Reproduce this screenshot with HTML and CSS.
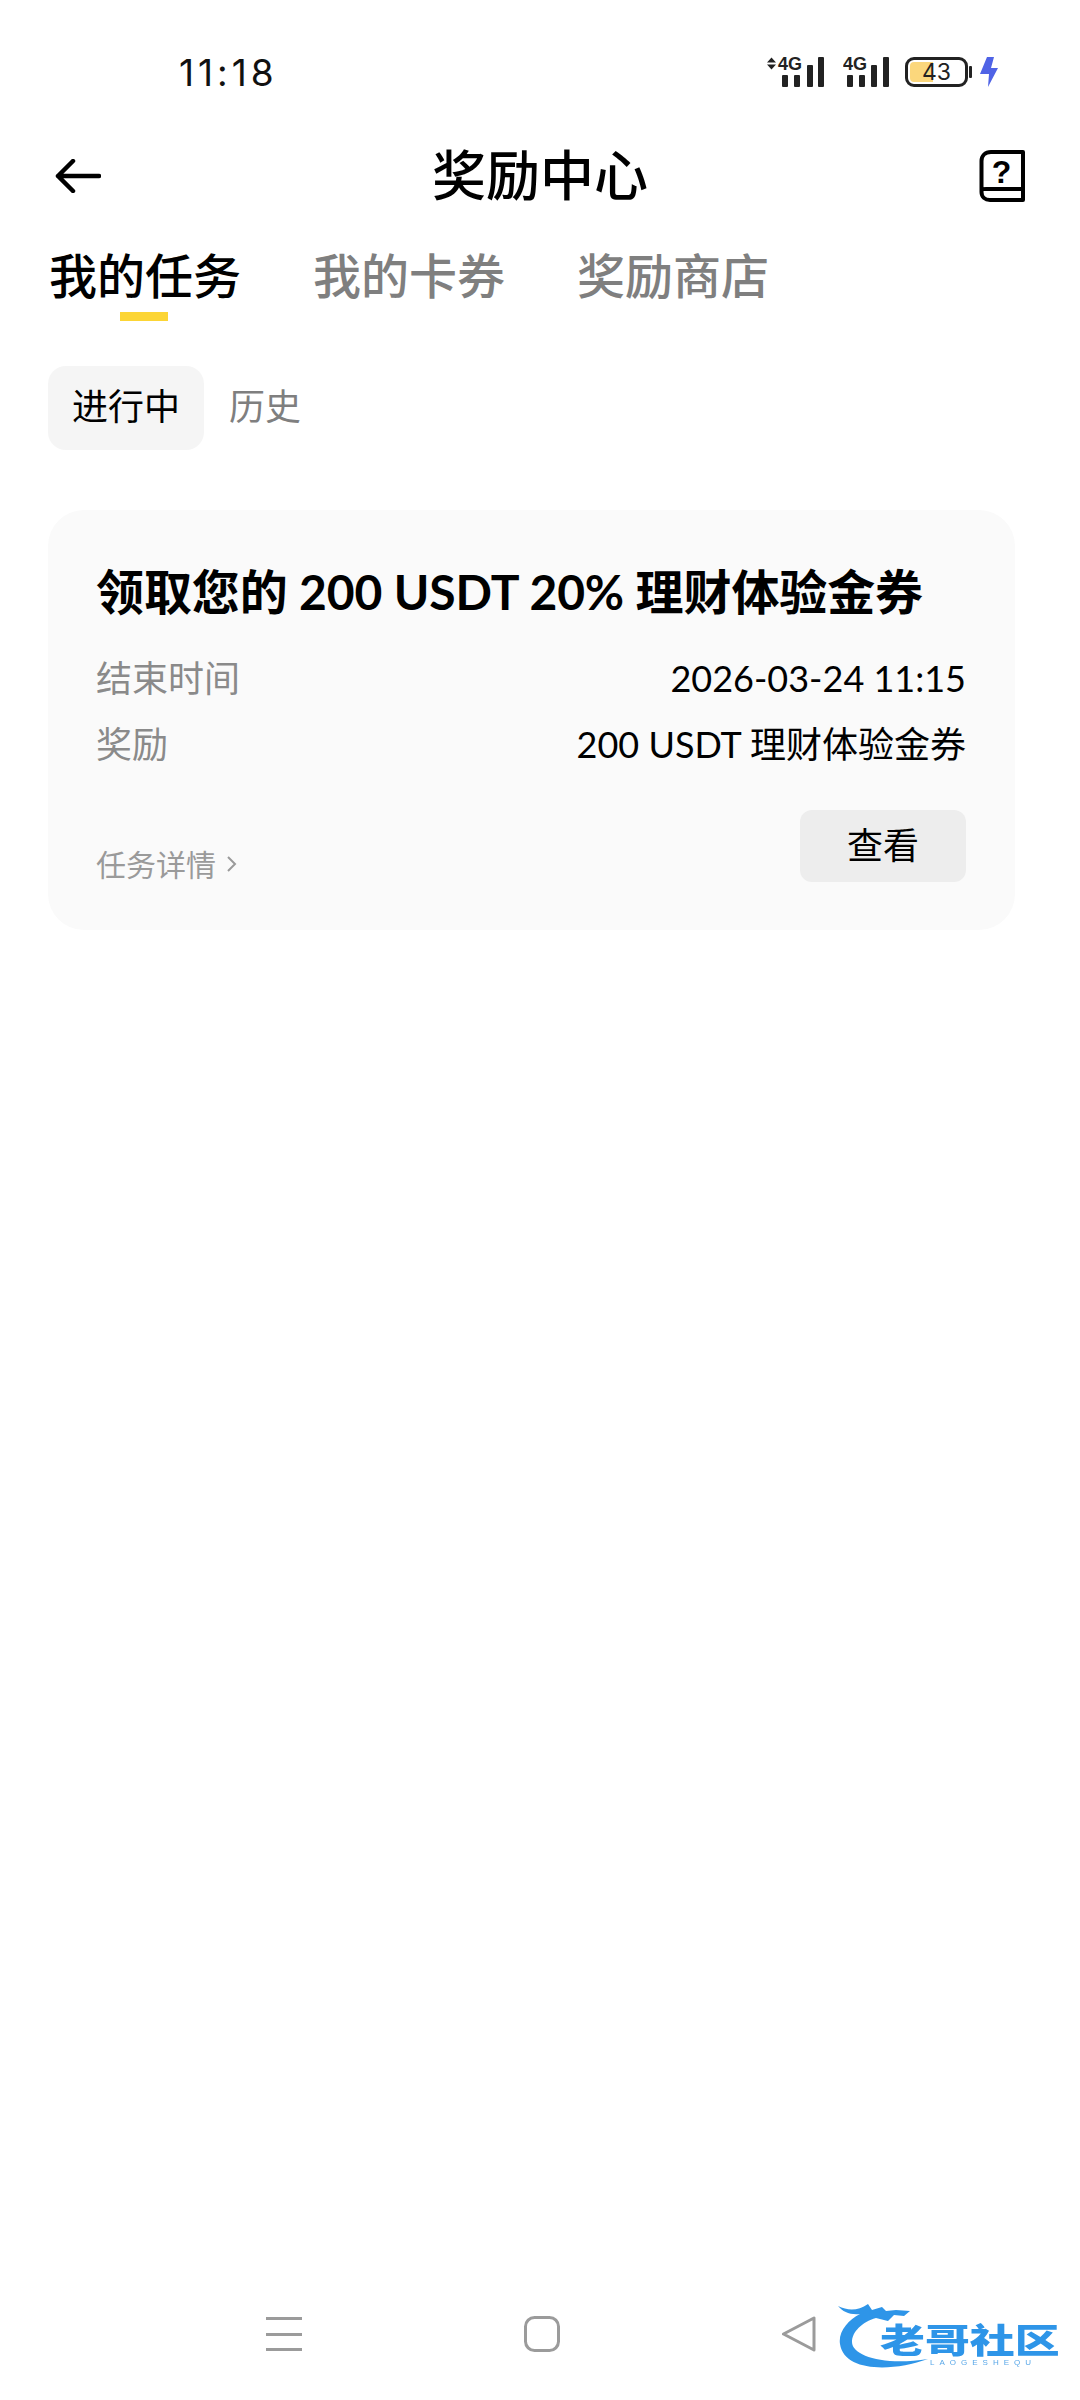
FILE: index.html
```html
<!DOCTYPE html>
<html lang="zh">
<head>
<meta charset="utf-8">
<title>奖励中心</title>
<link rel="stylesheet" href="styles.css">
</head>
<body>
<div class="screen">
  <div class="status">
    <span class="time">11:18</span>
    <div class="status-icons">
      <svg class="sig" width="60" height="40" viewBox="0 -4 60 40">
        <path d="M1 6.500 5.500 1.500 10 6.500ZM1 8.500H10L5.500 13.500Z" fill="#222"/>
        <text x="12" y="14" class="sig-text">4G</text>
        <rect x="16" y="19" width="6" height="12" rx="1" fill="#222"/>
        <rect x="28" y="19" width="6" height="12" rx="1" fill="#222"/>
        <rect x="41" y="9" width="6" height="22" rx="1" fill="#222"/>
        <rect x="52" y="1" width="6" height="30" rx="1" fill="#222"/>
      </svg>
      <svg class="sig2" width="46" height="40" viewBox="0 -4 46 40">
        <text x="0" y="14" class="sig-text">4G</text>
        <rect x="4" y="19" width="6" height="12" rx="1" fill="#222"/>
        <rect x="16" y="19" width="6" height="12" rx="1" fill="#222"/>
        <rect x="28" y="9" width="6" height="22" rx="1" fill="#222"/>
        <rect x="40" y="1" width="6" height="30" rx="1" fill="#222"/>
      </svg>
      <div class="battery">
        <div class="battery-body"><span class="battery-fill"></span><span class="battery-num">43</span></div>
        <span class="battery-tip"></span>
      </div>
      <svg class="bolt" width="18" height="32" viewBox="0 0 18 32"><path d="M7 1H14L11 12H18L8 31 9 18H0Z" fill="#4f63e6"/></svg>
    </div>
  </div>

  <header class="nav">
    <svg class="back" width="46" height="34" viewBox="0 0 46 34"><path d="M18 2 3 17 18 32M3 17H44" fill="none" stroke="#000" stroke-width="4.500" stroke-linecap="round" stroke-linejoin="round"/></svg>
    <h1 class="nav-title">奖励中心</h1>
    <svg class="help" width="46" height="52" viewBox="0 0 46 52">
      <path d="M44 2H12C6 2 2.500 6 2.500 11V42C2.500 47 6 50 11 50H44ZM2.500 42C2.500 38 6 39 11 39H44" fill="none" stroke="#000" stroke-width="4" stroke-linejoin="round"/>
      <text x="22.500" y="33" class="help-q">?</text>
    </svg>
  </header>

  <nav class="tabs">
    <a class="tab tab-active">我的任务</a>
    <a class="tab">我的卡券</a>
    <a class="tab">奖励商店</a>
  </nav>

  <div class="chips">
    <span class="chip chip-active">进行中</span>
    <span class="chip">历史</span>
  </div>

  <section class="card">
    <h2 class="card-title">领取您的 200 USDT 20% 理财体验金券</h2>
    <div class="row"><span class="label">结束时间</span><span class="value">2026-03-24 11:15</span></div>
    <div class="row row-2"><span class="label">奖励</span><span class="value">200 USDT 理财体验金券</span></div>
    <div class="card-foot">
      <span class="detail">任务详情
        <svg class="chev" width="11" height="18" viewBox="0 0 11 18"><path d="M2 2 9 9 2 16" fill="none" stroke="#9a9a9a" stroke-width="2"/></svg>
      </span>
      <span class="btn">查看</span>
    </div>
  </section>

  <div class="navbar">
    <svg width="36" height="36" viewBox="0 0 36 36"><path d="M0 2.500H36M0 18.500H36M0 33.500H36" stroke="#9b9b9b" stroke-width="3" fill="none"/></svg>
    <svg width="36" height="36" viewBox="0 0 36 36"><rect x="1.500" y="1.500" width="33" height="33" rx="9" fill="none" stroke="#9b9b9b" stroke-width="3"/></svg>
    <svg width="36" height="36" viewBox="0 0 36 36"><path d="M2.500 18 33 2V34Z" fill="none" stroke="#9b9b9b" stroke-width="3" stroke-linejoin="round"/></svg>
  </div>

  <div class="logo">
    <svg class="dragon" width="120" height="76" viewBox="0 0 120 76">
      <path d="M0 4C10 9 20 9 30 2L34 8 44 5 48 9 58 8 72 9 66 14 56 13 50 19 38 16C24 20 14 30 14 40 14 54 46 64 90 57 54 70 6 70 2 42 0 30 10 18 22 12 12 13 5 10 0 4Z" fill="#2e95e8"/>
    </svg>
    <span class="logo-cn">老哥社区</span>
    <span class="logo-en">LAOGESHEQU</span>
  </div>
</div>
</body>
</html>
```

FILE: styles.css
```css
* { box-sizing: border-box; }
html, body { margin: 0; padding: 0; background: #fff; }
body { font-family: Lato, "Noto Sans CJK SC", sans-serif; color: #000; }

.screen { position: relative; width: 1080px; height: 2400px; overflow: hidden; }

.status { display: flex; justify-content: space-between; align-items: center; height: 56px; margin-top: 44px; padding: 0 82px 0 179px; }
.time { font-size: 37px; letter-spacing: 4px; color: #111; font-family: Inter, sans-serif; }
.status-icons { display: flex; align-items: center; }
.sig { margin-right: 17px; }
.sig2 { margin-right: 16px; }
.sig-text { font: 700 18px "Liberation Sans", sans-serif; fill: #222; }
.battery { display: flex; align-items: center; margin-right: 8px; }
.battery-body { position: relative; width: 63px; height: 30px; border: 3px solid #222; border-radius: 9px; }
.battery-fill { position: absolute; left: 2px; top: 2px; bottom: 2px; width: 23px; background: #fbd77c; border-radius: 4px 0 0 4px; }
.battery-num { position: absolute; inset: 0; text-align: center; font: 23px/24px Inter, sans-serif; color: #222; }
.battery-tip { width: 3px; height: 12px; margin-left: 1px; background: #222; border-radius: 1px; }

.nav { display: flex; justify-content: space-between; align-items: center; height: 80px; margin-top: 36px; padding: 0 55px; }
.nav-title { margin: 0; font-size: 54px; font-weight: 500; line-height: 80px; }
.help-q { font: 700 32px "Liberation Sans", sans-serif; fill: #000; text-anchor: middle; }

.tabs { display: flex; gap: 72px; padding: 0 49px; margin-top: 24px; }
.tab { position: relative; font-size: 48px; font-weight: 500; line-height: 72px; color: #7f7f7f; padding-bottom: 10px; }
.tab-active { color: #000; }
.tab-active::after { content: ""; position: absolute; left: 71px; bottom: 1px; width: 48px; height: 9px; background: #fcd535; }

.chips { display: flex; margin-top: 44px; padding: 0 48px; }
.chip { display: block; height: 84px; padding: 0 25px; font-size: 36px; line-height: 80px; color: #7f7f7f; white-space: nowrap; }
.chip-active { width: 156px; padding: 0 24px; background: #f5f5f5; border-radius: 18px; color: #000; }

.card { margin: 60px 65px 0 48px; height: 420px; padding: 50px 49px 0 48px; background: #fafafa; border-radius: 36px; }
.card-title { margin: 0; font-size: 48px; font-weight: 700; letter-spacing: -0.120px; line-height: 64px; white-space: nowrap; }
.row { display: flex; justify-content: space-between; margin-top: 29px; font-size: 36px; line-height: 50px; }
.row-2 { margin-top: 16px; }
.label { color: #8a8a8a; }
.value { color: #000; }
.card-foot { display: flex; justify-content: space-between; align-items: flex-end; margin-top: 41px; }
.detail { display: flex; align-items: center; gap: 10px; font-size: 30px; line-height: 46px; color: #9a9a9a; margin-bottom: -5px; }
.btn { display: block; width: 166px; height: 72px; background: #ededed; border-radius: 12px; text-align: center; font-size: 36px; line-height: 70px; }

.navbar { position: absolute; left: 266px; right: 263px; top: 2316px; display: flex; justify-content: space-between; align-items: center; }

.logo { position: absolute; left: 838px; top: 2300px; width: 240px; height: 90px; filter: blur(0.6px); }
.dragon { position: absolute; left: 0; top: 2px; }
.logo-cn { position: absolute; left: 42px; top: 18px; font-size: 34px; line-height: 44px; font-weight: 900; color: #2e95e8; white-space: nowrap; transform: scaleX(1.32); transform-origin: left center; }
.logo-en { position: absolute; left: 92px; top: 58px; font: 8px/10px "Liberation Sans", sans-serif; letter-spacing: 5px; color: #5aa8e8; white-space: nowrap; }
```
